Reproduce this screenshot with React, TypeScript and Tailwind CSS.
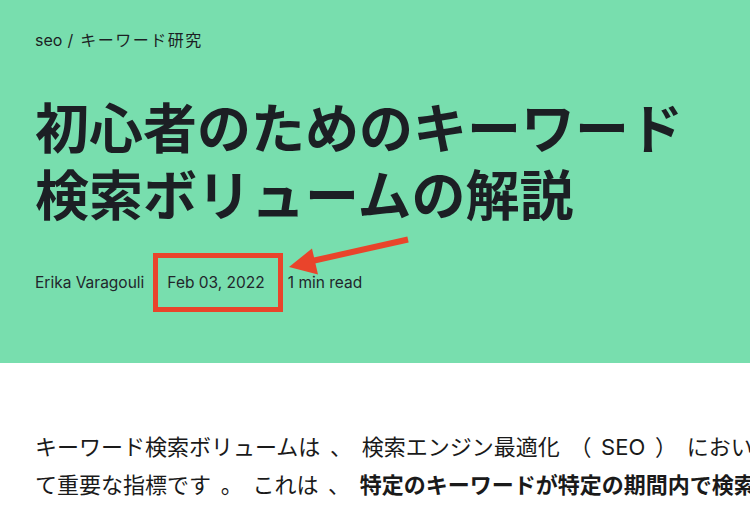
import React from "react";

const sans = "font-['Inter','Noto_Sans_CJK_JP',sans-serif]";

function Annotation() {
  // red arrow pointing at the date
  return (
    <svg
      className="pointer-events-none absolute left-0 top-0"
      width="750"
      height="363"
      viewBox="0 0 750 363"
    >
      <line x1="408" y1="239.5" x2="312" y2="261" stroke="#e9442b" strokeWidth="6" />
      <polygon points="289,267 312,248.5 318,274.5" fill="#e9442b" />
    </svg>
  );
}

export default function App() {
  return (
    <div className={`w-[750px] h-[508px] overflow-hidden bg-white ${sans}`}>
      <header className="relative h-[363px] bg-[#78deae] pl-[35px] pt-[30px] text-[#1c1f24]">
        <nav className="flex items-center text-[16px] leading-5">
          <span>seo</span>
          <span className="ml-[5px]">/</span>
          <span className="ml-[7px] tracking-[1.5px]">キーワード研究</span>
        </nav>

        <h1 className="mt-[46px] max-w-[660px] text-[54px] font-bold leading-[67px]">
          初心者のためのキーワード検索ボリュームの解説
        </h1>

        <div className="mt-[43px] flex items-center gap-[23px] text-[15.5px] leading-5 text-[#22262b]">
          <span>Erika Varagouli</span>
          <span className="relative">
            Feb 03, 2022
            <span className="absolute -left-[14px] -right-[18px] -top-[20px] -bottom-[19px] border-[5px] border-[#e9442b]" />
          </span>
          <span>1 min read</span>
        </div>

        <Annotation />
      </header>

      <main className="pl-[35px] pt-[65px]">
        <p className="w-[730px] text-[22px] leading-[38px] text-[#1a1a1a] [word-spacing:3.5px]">
          キーワード検索ボリュームは 、 検索エンジン最適化 （ SEO ） において重要な指標です 。 これは 、{" "}
          <strong className="font-bold">特定のキーワードが特定の期間内で検索された回数</strong>
        </p>
      </main>
    </div>
  );
}
